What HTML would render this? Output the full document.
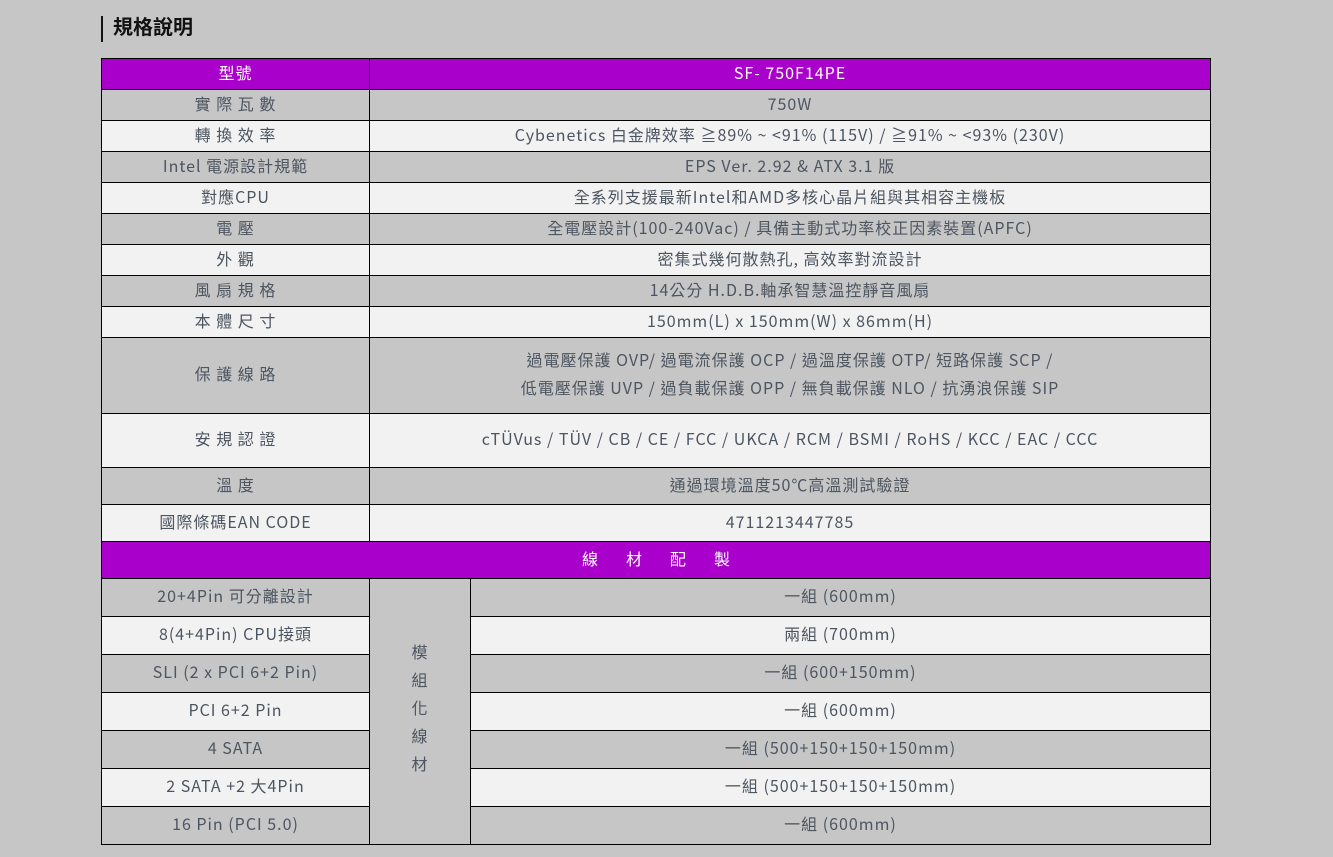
<!DOCTYPE html><html><head><meta charset="utf-8"><style>
body{margin:0;width:1333px;height:857px;background:#c6c6c6;font-family:"Noto Sans CJK TC",sans-serif;position:relative;overflow:hidden}
.c{position:absolute;box-sizing:border-box;border:1px solid #000;display:flex;align-items:center;justify-content:center;text-align:center;color:#4d5560;font-size:16px;line-height:28px;padding-bottom:5px;letter-spacing:1px}
.g{background:#c6c6c6}.w{background:#f2f2f2}.p{background:#aa00cc;color:#fff}
h1{position:absolute;left:101px;top:16px;margin:0;font-size:20px;font-weight:bold;color:#111;border-left:2px solid #111;padding-left:10px;line-height:20px;height:26px;box-sizing:border-box;padding-top:0}
</style></head><body>
<h1>規格說明</h1>
<div id="t"></div>
<script>
const rows=[
[58,89,'p','型號','SF- 750F14PE'],
[89,120,'g','實 際 瓦 數','750W'],
[120,151,'w','轉 換 效 率','Cybenetics 白金牌效率 ≧89% ~ <91% (115V) / ≧91% ~ <93% (230V)'],
[151,182,'g','Intel 電源設計規範','EPS Ver. 2.92 &amp; ATX 3.1 版'],
[182,213,'w','對應CPU','全系列支援最新Intel和AMD多核心晶片組與其相容主機板'],
[213,244,'g','電 壓','全電壓設計(100-240Vac) / 具備主動式功率校正因素裝置(APFC)'],
[244,275,'w','外 觀','密集式幾何散熱孔, 高效率對流設計'],
[275,306,'g','風 扇 規 格','14公分 H.D.B.軸承智慧溫控靜音風扇'],
[306,337,'w','本 體 尺 寸','150mm(L) x 150mm(W) x 86mm(H)'],
[337,413,'g','保 護 線 路','過電壓保護 OVP/ 過電流保護 OCP / 過溫度保護 OTP/ 短路保護 SCP /<br>低電壓保護 UVP / 過負載保護 OPP / 無負載保護 NLO / 抗湧浪保護 SIP'],
[413,467,'w','安 規 認 證','cTÜVus / TÜV / CB / CE / FCC / UKCA / RCM / BSMI / RoHS / KCC / EAC / CCC'],
[467,504,'g','溫 度','通過環境溫度50℃高溫測試驗證'],
[504,541,'w','國際條碼EAN CODE','4711213447785']];
let h='';
for(const r of rows){h+=`<div class="c ${r[2]}" style="left:101px;top:${r[0]}px;width:269px;height:${r[1]-r[0]+1}px">${r[3]}</div><div class="c ${r[2]}" style="left:369px;top:${r[0]}px;width:842px;height:${r[1]-r[0]+1}px">${r[4]}</div>`}
h+=`<div class="c p" style="left:101px;top:541px;width:1110px;height:38px;letter-spacing:28px;padding-left:28px">線材配製</div>`;
const r2=[['g','20+4Pin 可分離設計','一組 (600mm)'],['w','8(4+4Pin) CPU接頭','兩組 (700mm)'],['g','SLI (2 x PCI 6+2 Pin)','一組 (600+150mm)'],['w','PCI 6+2 Pin','一組 (600mm)'],['g','4 SATA','一組 (500+150+150+150mm)'],['w','2 SATA +2 大4Pin','一組 (500+150+150+150mm)'],['g','16 Pin (PCI 5.0)','一組 (600mm)']];
r2.forEach((r,i)=>{const y=578+i*38;h+=`<div class="c ${r[0]}" style="left:101px;top:${y}px;width:269px;height:39px">${r[1]}</div><div class="c ${r[0]}" style="left:470px;top:${y}px;width:741px;height:39px">${r[2]}</div>`});
h+=`<div class="c g" style="left:369px;top:578px;width:102px;height:267px;line-height:28px;padding-bottom:10px">模<br>組<br>化<br>線<br>材</div>`;
document.getElementById('t').innerHTML=h;
</script>
</body></html>
